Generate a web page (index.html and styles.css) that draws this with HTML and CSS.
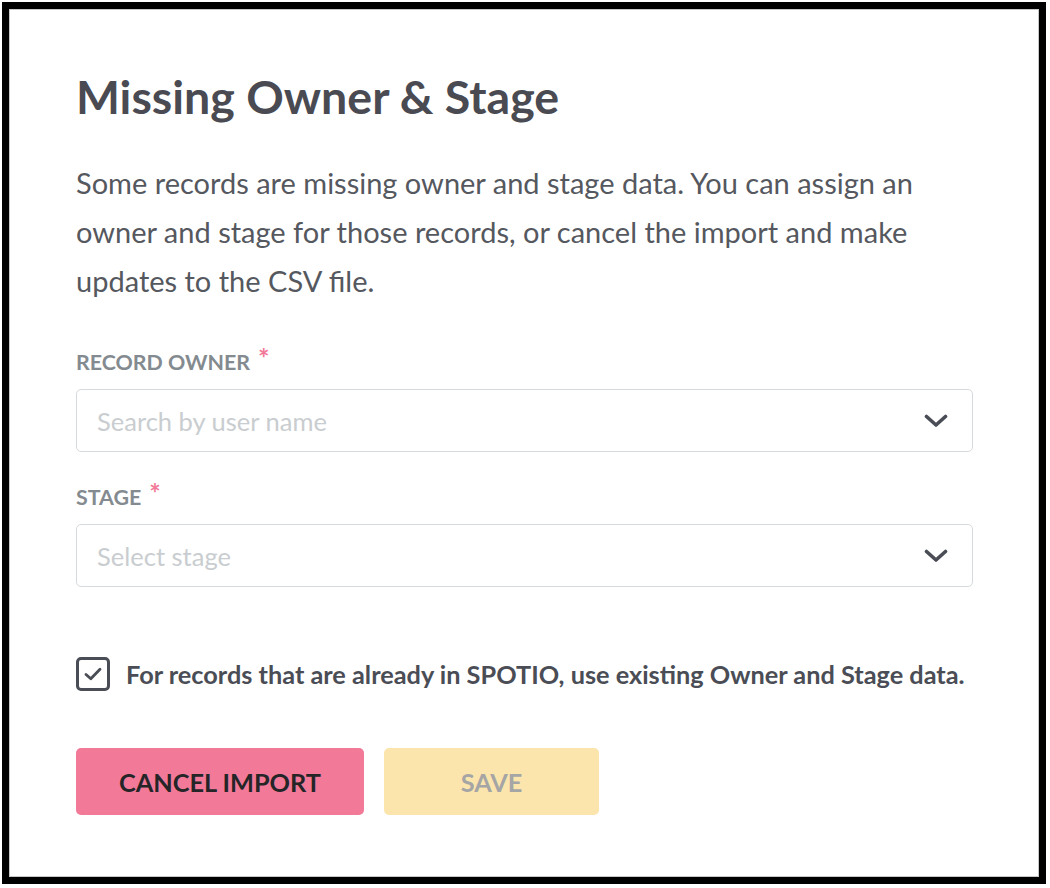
FILE: index.html
```html
<!DOCTYPE html>
<html lang="en">
<head>
<meta charset="utf-8">
<title>Missing Owner &amp; Stage</title>
<link rel="stylesheet" href="styles.css">
</head>
<body>
<div class="frame">
  <div class="dialog">
    <h1 class="title">Missing Owner &amp; Stage</h1>
    <p class="desc">Some records are missing owner and stage data. You can assign an owner and stage for those records, or cancel the import and make updates to the CSV file.</p>

    <div class="field">
      <div class="label">RECORD OWNER <span class="req">*</span></div>
      <div class="select">
        <span class="placeholder">Search by user name</span>
        <svg class="chev" width="24" height="14" viewBox="0 0 24 14"><path d="M2.5 2.5 L12 11 L21.5 2.5" fill="none" stroke="#4a4d55" stroke-width="3.6" stroke-linecap="round" stroke-linejoin="round"/></svg>
      </div>
    </div>

    <div class="field">
      <div class="label">STAGE <span class="req">*</span></div>
      <div class="select">
        <span class="placeholder">Select stage</span>
        <svg class="chev" width="24" height="14" viewBox="0 0 24 14"><path d="M2.5 2.5 L12 11 L21.5 2.5" fill="none" stroke="#4a4d55" stroke-width="3.6" stroke-linecap="round" stroke-linejoin="round"/></svg>
      </div>
    </div>

    <label class="check">
      <span class="box">
        <svg width="20" height="16" viewBox="0 0 20 16"><path d="M3 8.5 L7.8 12.8 L17 3.2" fill="none" stroke="#4a4d55" stroke-width="2.8" stroke-linecap="round" stroke-linejoin="round"/></svg>
      </span>
      <span class="check-text">For records that are already in SPOTIO, use existing Owner and Stage data.</span>
    </label>

    <div class="actions">
      <button class="btn btn-cancel">CANCEL IMPORT</button>
      <button class="btn btn-save">SAVE</button>
    </div>
  </div>
</div>
</body>
</html>
```

FILE: styles.css
```css
* { box-sizing: border-box; }
html, body {
  margin: 0;
  padding: 0;
  background: #ffffff;
}
body {
  font-family: Lato, "Open Sans", Arial, sans-serif;
  color: #4a4d55;
}
.frame {
  margin: 2px;
  width: 1044px;
  height: 882px;
  border: 7px solid #000;
  box-shadow: inset 0 0 0 1px #c8c8c8;
  background: #fff;
}
.dialog {
  padding: 59px 66px 0 67px;
}
.title {
  margin: 0;
  font-size: 46.5px;
  font-weight: 700;
  line-height: 56px;
  color: #4a4b52;
}
.desc {
  margin: 34px 0 0 0;
  font-size: 29px;
  line-height: 49px;
  font-weight: 400;
  color: #55585e;
  width: 880px;
}
.field {
  margin-top: 44px;
}
.field + .field {
  margin-top: 32px;
}
.label {
  font-size: 21.4px;
  font-weight: 700;
  color: #848b90;
  line-height: 26px;
  display: flex;
  align-items: flex-start;
}
.req {
  color: #f27a98;
  font-size: 27px;
  margin-left: 8px;
  line-height: 18px;
}
.select {
  margin-top: 14px;
  height: 63px;
  border: 1.5px solid #d6dadd;
  border-radius: 5px;
  display: flex;
  align-items: center;
  justify-content: space-between;
  padding: 0 24px 0 20px;
}
.placeholder {
  font-size: 25.5px;
  color: #c9cdd0;
}
.chev {
  display: block;
}
.check {
  display: flex;
  align-items: center;
  margin-top: 70px;
  gap: 16px;
}
.box {
  width: 34px;
  height: 34px;
  border: 3px solid #4a4d55;
  border-radius: 5px;
  display: flex;
  align-items: center;
  justify-content: center;
}
.check-text {
  font-size: 25.3px;
  font-weight: 700;
  color: #4a4d55;
}
.actions {
  display: flex;
  gap: 20px;
  margin-top: 57px;
}
.btn {
  height: 67px;
  border: none;
  border-radius: 5px;
  font-family: Lato, "Open Sans", Arial, sans-serif;
  font-size: 25.3px;
  font-weight: 700;
  padding: 0;
}
.btn-cancel {
  width: 288px;
  background: #f27a98;
  color: #252528;
}
.btn-save {
  width: 215px;
  background: #fbe5ad;
  color: #a5a5a5;
}
```
